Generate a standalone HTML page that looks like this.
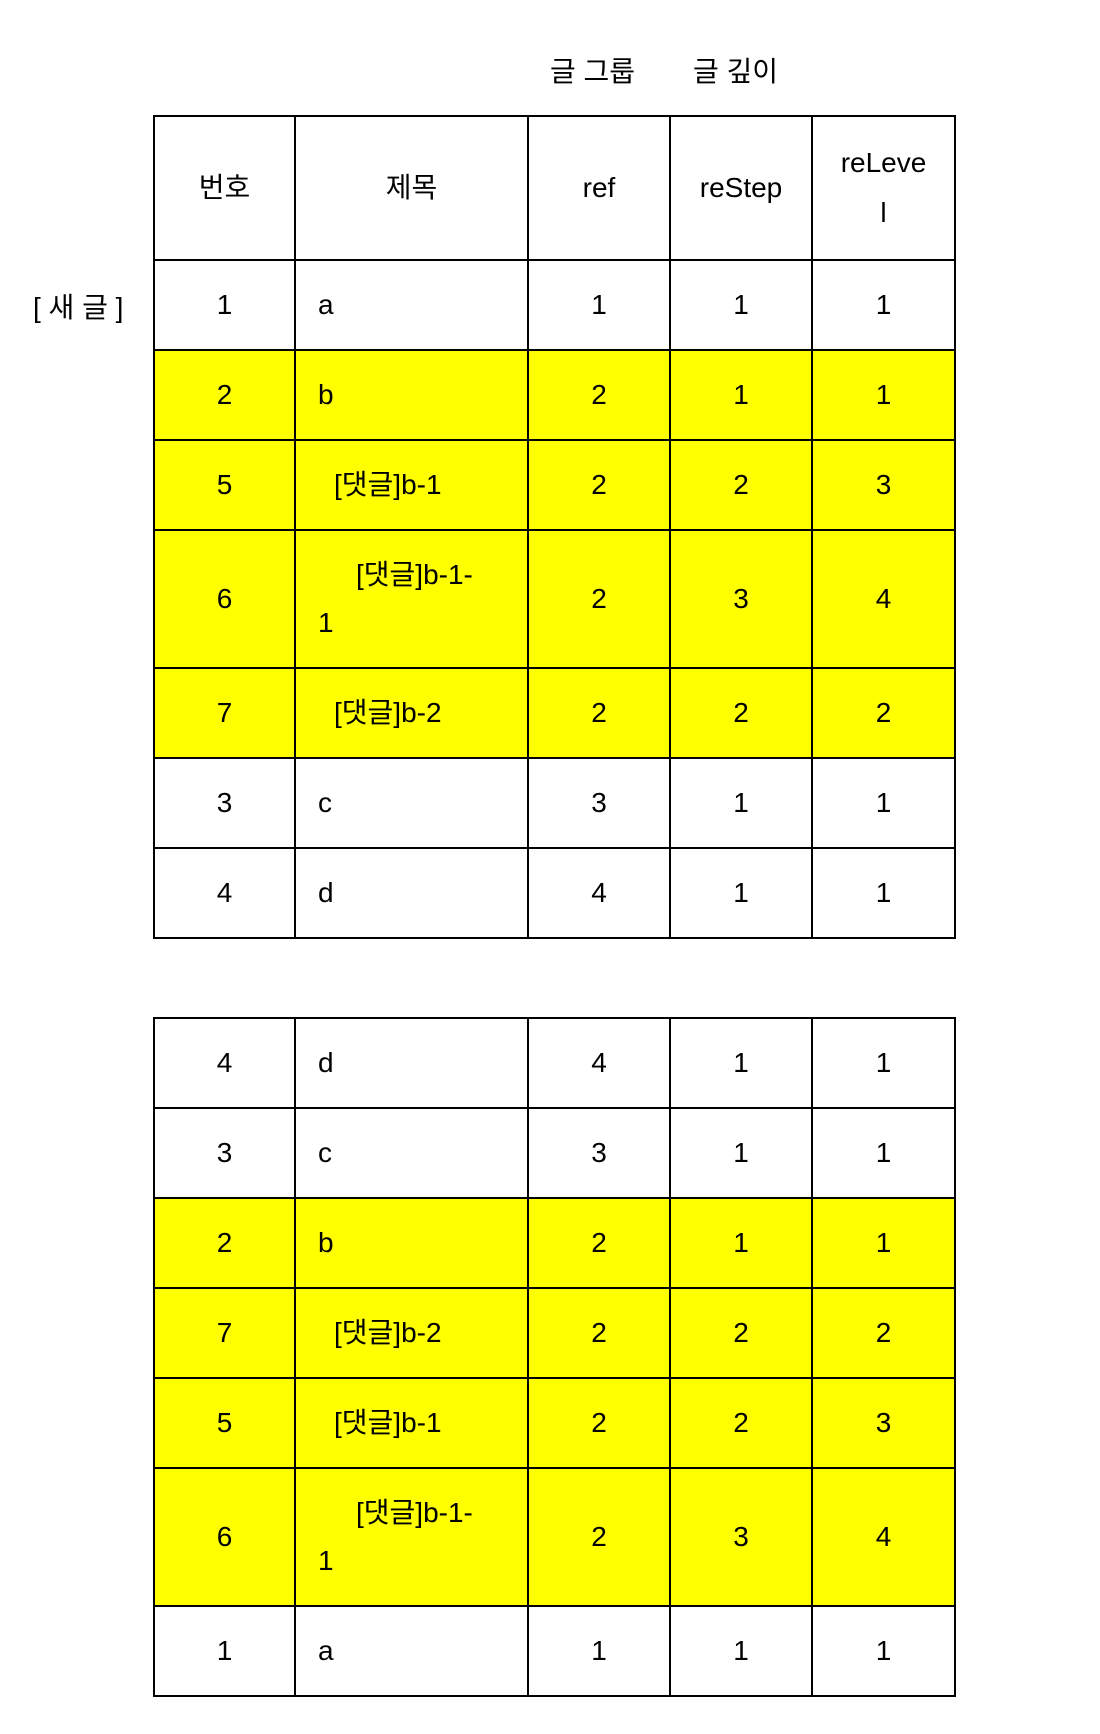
<!DOCTYPE html>
<html><head><meta charset="utf-8"><style>
body{margin:0;background:#fff;width:1100px;height:1734px;position:relative;font-family:"Liberation Sans","Noto Sans CJK KR",sans-serif;font-size:28px;color:#000;}
table{position:absolute;left:153px;border-collapse:collapse;table-layout:fixed;width:801px;}
td{border:2px solid #000;text-align:center;vertical-align:middle;height:88px;padding:0;line-height:48px;}
td.t{text-align:left;padding-left:22px;}
tr.y td{background:#ffff00;}
tr.tall td{height:136px;}
.lab{position:absolute;font-size:28px;}
.i1{display:inline-block;width:16px}
.i2{display:inline-block;width:38px}
</style></head><body>
<div class="lab" style="left:550px;top:50px">글 그룹</div>
<div class="lab" style="left:693px;top:50px">글 깊이</div>
<div class="lab" style="left:33px;top:286px">[ 새 글 ]</div>
<table style="top:115px">
<colgroup><col style="width:141px"><col style="width:233px"><col style="width:142px"><col style="width:142px"><col style="width:143px"></colgroup>
<tr><td style="height:142px">번호</td><td>제목</td><td>ref</td><td>reStep</td><td style="line-height:50px">reLeve<br>l</td></tr>
<tr><td>1</td><td class="t">a</td><td>1</td><td>1</td><td>1</td></tr>
<tr class="y"><td>2</td><td class="t">b</td><td>2</td><td>1</td><td>1</td></tr>
<tr class="y"><td>5</td><td class="t"><span class="i1"></span>[댓글]b-1</td><td>2</td><td>2</td><td>3</td></tr>
<tr class="y tall"><td>6</td><td class="t"><span class="i2"></span>[댓글]b-1-<br>1</td><td>2</td><td>3</td><td>4</td></tr>
<tr class="y"><td>7</td><td class="t"><span class="i1"></span>[댓글]b-2</td><td>2</td><td>2</td><td>2</td></tr>
<tr><td>3</td><td class="t">c</td><td>3</td><td>1</td><td>1</td></tr>
<tr><td>4</td><td class="t">d</td><td>4</td><td>1</td><td>1</td></tr>
</table>
<table style="top:1017px">
<colgroup><col style="width:141px"><col style="width:233px"><col style="width:142px"><col style="width:142px"><col style="width:143px"></colgroup>
<tr><td>4</td><td class="t">d</td><td>4</td><td>1</td><td>1</td></tr>
<tr><td>3</td><td class="t">c</td><td>3</td><td>1</td><td>1</td></tr>
<tr class="y"><td>2</td><td class="t">b</td><td>2</td><td>1</td><td>1</td></tr>
<tr class="y"><td>7</td><td class="t"><span class="i1"></span>[댓글]b-2</td><td>2</td><td>2</td><td>2</td></tr>
<tr class="y"><td>5</td><td class="t"><span class="i1"></span>[댓글]b-1</td><td>2</td><td>2</td><td>3</td></tr>
<tr class="y tall"><td>6</td><td class="t"><span class="i2"></span>[댓글]b-1-<br>1</td><td>2</td><td>3</td><td>4</td></tr>
<tr><td>1</td><td class="t">a</td><td>1</td><td>1</td><td>1</td></tr>
</table>
</body></html>
